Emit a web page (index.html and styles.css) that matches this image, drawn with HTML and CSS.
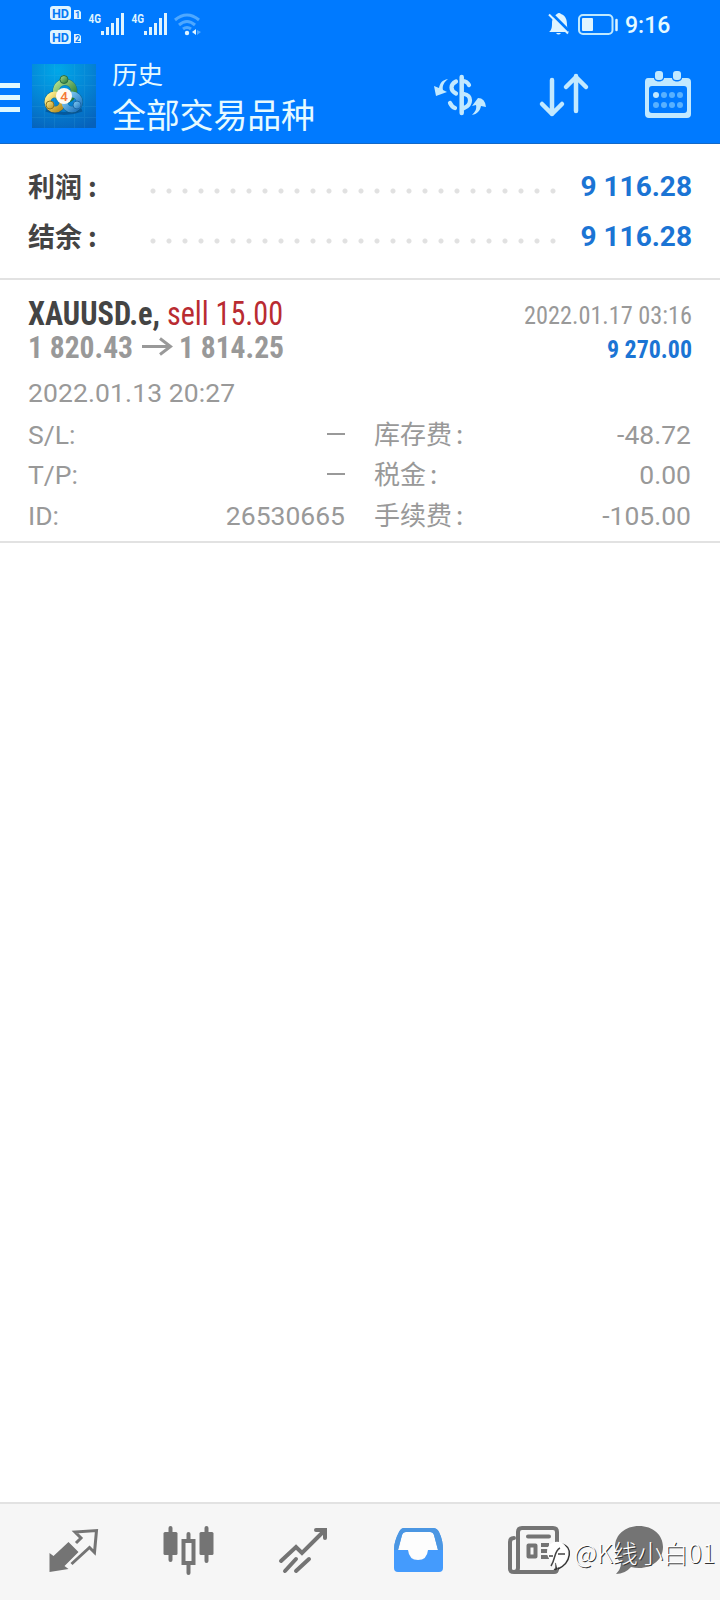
FILE: index.html
```html
<!DOCTYPE html>
<html lang="zh-CN">
<head>
<meta charset="utf-8">
<title>历史</title>
<link rel="stylesheet" href="styles.css">
</head>
<body>
<div class="app">
  <header class="header">
    <div class="status">
      <svg class="status-left" width="160" height="48" viewBox="45 0 160 48">
        <g fill="#dff4ff">
          <rect x="50" y="6" width="21" height="14" rx="3"/><rect x="50" y="30" width="21" height="14" rx="3"/>
          <path d="M74 10h5l2 2v7h-7zM74 34h5l2 2v7h-7z"/>
        </g>
        <g fill="#0479f5" font-family="Roboto, sans-serif" font-weight="700">
          <text x="52" y="18" font-size="13.5" textLength="17" lengthAdjust="spacingAndGlyphs">HD</text>
          <text x="52" y="42" font-size="13.5" textLength="17" lengthAdjust="spacingAndGlyphs">HD</text>
          <text x="75" y="18" font-size="9">1</text><text x="75" y="42" font-size="9">2</text>
        </g>
        <g fill="#dff4ff" font-family="Roboto, sans-serif" font-weight="700" font-size="13.500">
          <text x="88.500" y="23" textLength="12.500" lengthAdjust="spacingAndGlyphs">4G</text>
          <text x="131.500" y="23" textLength="12.500" lengthAdjust="spacingAndGlyphs">4G</text>
        </g>
        <path d="M102.500 35v-4M107.500 35v-8M112.500 35v-12M117.500 35v-17M122.500 35v-22M145.500 35v-4M150.500 35v-8M155.500 35v-12M160.500 35v-17M165.500 35v-22" stroke="#dff4ff" stroke-width="3"/>
        <g fill="none" stroke="#4ea8ff" stroke-width="3"><path d="M175 20q12-10 24 0M179 25q8-7 16 0M183 29q4-3 8 0"/></g>
        <circle cx="187" cy="33" r="2.200" fill="#dff4ff"/><path d="M192 32l4-3v6z" fill="#dff4ff"/><path d="M197 35v-5l4 2z" fill="#4ea8ff"/>
      </svg>
      <svg class="status-right" width="84" height="30" viewBox="544 10 84 30">
        <path d="M549 32c3-2 3-6 3-9 0-5 3-8 5-9 1-1.500 3-1.500 4 0 5 2 6 6 6 11 0 3 1 5 2 7z" fill="#dff4ff"/>
        <path d="M556 33h5q-2.500 3-5 0" fill="#dff4ff"/>
        <path d="M551 13l18 18" stroke="#007aff" stroke-width="3"/>
        <path d="M549 14.500l19 19" stroke="#dff4ff" stroke-width="2"/>
        <rect x="579" y="15" width="33.500" height="19" rx="4" fill="none" stroke="#bfe9ff" stroke-width="2"/>
        <rect x="582" y="18" width="11" height="13" rx="1" fill="#dff4ff"/><path d="M616.500 20v10" stroke="#dff4ff" stroke-width="2.500" stroke-linecap="round"/>
      </svg>
      <span class="clock">9:16</span>
    </div>
    <div class="toolbar">
      <div class="menu"><i></i><i></i><i></i></div>
      <svg class="logo" width="64" height="64" viewBox="0 0 64 64">
        <defs>
          <radialGradient id="bg" cx=".4" cy=".1" r="1"><stop offset="0" stop-color="#00a8e9"/><stop offset=".5" stop-color="#0486d6"/><stop offset="1" stop-color="#0661bb"/></radialGradient>
          <linearGradient id="green" x2="1" y2="1"><stop stop-color="#b2df8d"/><stop offset="1" stop-color="#187332"/></linearGradient>
          <linearGradient id="gold" x2="1" y2="1"><stop stop-color="#fff392"/><stop offset="1" stop-color="#b58a1c"/></linearGradient>
          <linearGradient id="sky" x2="1" y2="1"><stop stop-color="#8ad4f7"/><stop offset="1" stop-color="#1b70bd"/></linearGradient>
        </defs>
        <path fill="url(#bg)" d="M0 0h64v64H0z"/>
        <path d="M12.500 0v64M22.500 0v64M42.500 0v64M52.500 0v64M0 11.500h64M0 21.500h64M0 42.500h64M0 53.500h64" stroke="#51b9e3" opacity=".14"/>
        <path d="M14 46q18 7 36 0" stroke="#05396e" stroke-width="3" opacity=".5" fill="none"/>
        <g fill="none" stroke="#174b4d" stroke-width="7" opacity=".45"><circle cx="33" cy="27" r="9"/><circle cx="23" cy="38" r="7.500"/><circle cx="40" cy="38" r="7.500"/></g>
        <circle cx="33" cy="27" r="9" fill="none" stroke="url(#green)" stroke-width="6"/>
        <circle cx="23" cy="38" r="7.500" fill="none" stroke="url(#gold)" stroke-width="6"/>
        <circle cx="40" cy="38" r="7.500" fill="none" stroke="url(#sky)" stroke-width="6"/>
        <circle cx="32" cy="15.500" r="4" fill="url(#green)" stroke="#276c42"/><circle cx="18" cy="41" r="4" fill="url(#gold)" stroke="#8b741e"/><circle cx="45" cy="41" r="4" fill="url(#sky)" stroke="#1c69a9"/>
        <circle cx="32" cy="32" r="8" fill="#fffaf1"/><text x="28.300" y="37" fill="#f47733" font-family="Roboto, sans-serif" font-size="13.500" font-weight="500">4</text>
      </svg>
      <div class="titles"><div class="subtitle">历史</div><div class="title">全部交易品种</div></div>
      <svg class="actions" width="264" height="54" viewBox="430 68 264 54">
        <g fill="none" stroke="#c2e9ff" stroke-linecap="round" stroke-linejoin="round">
          <path d="M461.700 77v36" stroke-width="4.500"/>
          <path d="M469 85q-2-4-7-4M456 81.500c-6 3-6 9 0 12M450 103q2 4 5 5M464 94c8 1 8 11 0 14" stroke-width="4.200"/>
          <path d="M552 80v34M542 104l10 10 10-10M576 111V76M566 87l10-10 10 10" stroke-width="4.500"/>
        </g>
        <g fill="#c2e9ff">
          <path d="M448 79c-6 1-8 4-9 9l-5-2 2 10 11-4-4-2c-1-4 1-8 5-11zM472 115c3-3 5-6 4-10l-4 1 6-8q7 0 8 9l-5-1c-1 5-4 8-9 9z"/>
          <path fill-rule="evenodd" d="M648 78h39q4 0 4 4v32q0 4-4 4h-38q-4 0-4-4V82q0-4 3-4zm4 8q-3 0-3 3v21q0 3 3 3h32q3 0 3-3V89q0-3-3-3z"/>
        </g>
        <path d="M654 77c-1 6 11 6 10 0zM672 77c-1 6 11 6 10 0z" fill="#007aff"/>
        <rect x="655" y="71" width="8" height="9" rx="3" fill="#c2e9ff"/><rect x="673" y="71" width="8" height="9" rx="3" fill="#c2e9ff"/>
        <circle cx="656" cy="95" r="3" fill="#c2e9ff"/>
        <g fill="#58b1ff"><circle cx="664" cy="95" r="3"/><circle cx="672" cy="95" r="3"/><circle cx="680" cy="95" r="3"/><circle cx="656" cy="105" r="3"/><circle cx="664" cy="105" r="3"/><circle cx="672" cy="105" r="3"/><circle cx="680" cy="105" r="3"/></g>
      </svg>
    </div>
  </header>
  <main class="content">
    <section class="summary">
      <div class="sum-row"><span class="sum-label">利润<b class="colon">:</b></span><span class="dots"></span><span class="sum-value">9 116.28</span></div>
      <div class="sum-row"><span class="sum-label">结余<b class="colon">:</b></span><span class="dots"></span><span class="sum-value">9 116.28</span></div>
    </section>
    <section class="deal">
      <svg class="deal-head" width="664" height="80" viewBox="28 285 664 80">
        <g class="condensed">
          <text x="28" y="324.500" class="symbol" textLength="132" lengthAdjust="spacingAndGlyphs">XAUUSD.e,</text>
          <text x="167" y="324.500" class="side" textLength="116" lengthAdjust="spacingAndGlyphs">sell 15.00</text>
          <text x="524" y="324" class="close-time" textLength="168" lengthAdjust="spacingAndGlyphs">2022.01.17 03:16</text>
          <text x="28" y="358" class="price" textLength="105" lengthAdjust="spacingAndGlyphs">1 820.43</text>
          <text x="179" y="358" class="price" textLength="105" lengthAdjust="spacingAndGlyphs">1 814.25</text>
          <text x="607" y="358" class="profit" textLength="85" lengthAdjust="spacingAndGlyphs">9 270.00</text>
        </g>
        <path d="M142 346.500h28M160 338.500l10.500 8-10.500 8" fill="none" stroke="#999" stroke-width="3"/>
      </svg>
      <div class="open-time">2022.01.13 20:27</div>
      <div class="details">
        <div><span>S/L:</span><i class="dash"></i></div><div><span class="cjk">库存费<b class="colon">:</b></span><span>-48.72</span></div>
        <div><span>T/P:</span><i class="dash"></i></div><div><span class="cjk">税金<b class="colon">:</b></span><span>0.00</span></div>
        <div><span>ID:</span><span>26530665</span></div><div><span class="cjk">手续费<b class="colon">:</b></span><span>-105.00</span></div>
      </div>
    </section>
  </main>
  <nav class="nav">
    <svg width="720" height="96" viewBox="0 1504 720 96">
      <path d="M49.500 1553l4 3 15-14 10 10-14 14 4 3-19 3z" fill="#747474"/>
      <path d="M76 1543l5-5-6-6 21.500-1.500-2 22-5-5-18 16.500" fill="none" stroke="#747474" stroke-width="3"/>
      <g stroke="#747474" stroke-width="4" stroke-linecap="round"><path d="M170.500 1528v32M188.500 1534v39M206.500 1528v33"/></g>
      <rect x="163.500" y="1532" width="14" height="23" rx="1.500" fill="#747474"/><rect x="199.500" y="1532" width="14" height="23" rx="1.500" fill="#747474"/>
      <rect x="183.500" y="1541" width="10" height="22" fill="#f6f6f6" stroke="#747474" stroke-width="4"/>
      <path d="M281 1561l15-14 6 6 22-22M316 1530h9v8M285 1571l11-12M296 1571l13-12" fill="none" stroke="#747474" stroke-width="4" stroke-linecap="round"/>
      <path d="M403 1531h30l5 20h-39z" fill="#fdfdfd"/><circle cx="418.500" cy="1550" r="10" fill="#fdfdfd"/>
      <path fill-rule="evenodd" d="M404 1528h29q4 0 6 4c3 6 4 12 4 18v18q0 4-4 4h-41q-4 0-4-4v-18c0-7 2-12 5-18q2-4 5-4zm2 4q-3 0-4 3l-4 15h10q1 10 10 10t10-10h10l-4-15q-1-3-4-3z" fill="#449bfd"/>
      <path fill-rule="evenodd" d="M404 1528h29q4 0 6 4c3 6 4 12 4 18h-5l-4-15q-1-3-4-3h-24q-3 0-4 3l-4 15h-4c0-7 2-12 5-18q2-4 5-4z" fill="#4b96e2"/>
      <g fill="none" stroke="#747474" stroke-width="4" stroke-linejoin="round"><path d="M514 1538q-4 0-4 4v27q0 3 4 3h40q3 0 3-3v-37q0-4-4-4h-31q-4 0-4 4v36q0 4-4 4M528 1536.500h21" stroke-linecap="round"/><rect x="528.500" y="1545.500" width="7" height="11"/><path d="M541 1545h8M541 1551h8M541 1557h8"/></g>
      <path d="M639 1526c14 0 24 9 24 21s-10 21-24 21q-4 0-8-1-6 7-15 7 5-5 5-11c-4-4-6-10-6-16 0-12 10-21 24-21z" fill="#747474"/>
      <g class="watermark">
        <path d="M561 1544c13 2 10 19-3 25M554 1569q3 2 3-4" fill="none" stroke="#333" stroke-width="1.500"/>
        <path d="M547 1552c0-12 15-13 19-5 5 9-1 17-9 21l-1-5c-5-1-9-5-9-11z" fill="#fff"/>
        <path d="M551 1566c5-8 3-15 9-18M549 1556h4M558 1554h7" fill="none" stroke="#444" stroke-width="1.500"/>
        <text x="574" y="1563" class="mark">@K线小白01</text>
      </g>
    </svg>
  </nav>
</div>
</body>
</html>
```
FILE: styles.css
```css
* { box-sizing: border-box; }
body { margin: 0; background: #fff; font-family: Roboto, "Noto Sans CJK SC", sans-serif; }
.app { width: 720px; height: 1600px; display: flex; flex-direction: column; overflow: hidden; }
.header { height: 144px; background: #007aff; border-bottom: 1px solid #1269c8; color: #e6faff; }
.status { height: 48px; display: flex; padding-left: 45px; }
.status-right { margin: 10px 0 0 339px; }
.clock { margin: 11px 0 0 -3px; font-size: 23px; line-height: 29px; font-weight: 500; }
.toolbar { height: 95px; display: flex; align-items: flex-start; }
.menu { width: 20px; padding-top: 35px; display: grid; gap: 7px; }
.menu i { height: 5px; background: #dff8ff; }
.logo { margin: 16px 0 0 12px; }
.titles { width: 334px; padding: 12px 0 0 16px; }
.subtitle { font-size: 25.5px; line-height: 30px; }
.title { font-size: 34px; line-height: 52px; letter-spacing: -.2px; }
.actions { margin-top: 20px; }
.content { flex: 1; }
.summary { height: 136px; padding: 17px 28px 0; border-bottom: 2px solid #e2e2e2; }
.sum-row { height: 50px; display: flex; align-items: center; }
.sum-label { width: 120px; margin-top: -2px; font-size: 27px; font-weight: 700; color: #444; }
.colon { margin-left: 6px; font-family: "Noto Sans CJK SC", sans-serif; font-weight: inherit; }
.dots { width: 411px; height: 6px; margin-top: 9px; background: radial-gradient(circle at 5px 3px, #e1e1e1 2px, transparent 3px) 0 0 / 16px 6px; }
.sum-value { flex: 1; margin-top: 1px; text-align: right; color: #1b74d4; font-size: 28px; font-weight: 700; white-space: nowrap; }
.deal { height: 263px; padding: 5px 28px 0; border-bottom: 2px solid #e2e2e2; color: #999; }
.deal-head { display: block; overflow: visible; }
.condensed { font-family: "Roboto Condensed", Roboto, sans-serif; font-stretch: condensed; }
.symbol { fill: #444; font-size: 33px; font-weight: 700; }
.side { fill: #b92b31; font-size: 33px; }
.close-time { fill: #999; font-size: 26.5px; }
.price { fill: #999; font-size: 32px; font-weight: 700; }
.profit { fill: #1b74d4; font-size: 26.5px; font-weight: 700; }
.open-time { height: 49px; padding-top: 7px; font-size: 26.5px; line-height: 41px; letter-spacing: .1px; }
.details { display: grid; grid-template-columns: 317px 317px; column-gap: 29px; grid-auto-rows: 40.5px; font-size: 26.5px; }
.details > div { display: flex; justify-content: space-between; align-items: center; }
.cjk { margin-top: -4px; font-size: 26px; }
.cjk .colon { margin-left: 4px; }
.dash { width: 18px; height: 2px; margin-top: -1px; background: #999; }
.nav { height: 98px; background: #f6f6f6; border-top: 2px solid #e2e2e2; }
.nav svg { display: block; }
.mark { font-family: "Noto Sans CJK SC", sans-serif; font-size: 25.2px; font-weight: 300; fill: #fff; text-shadow: 1px 1px 0 #333; }
```
